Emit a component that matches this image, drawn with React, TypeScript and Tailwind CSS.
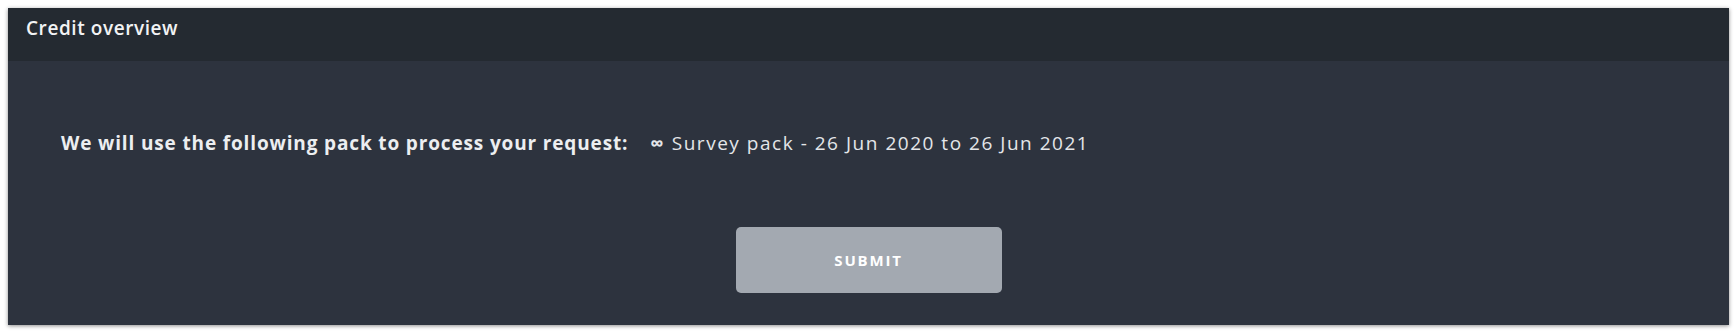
export default function App() {
  return (
    <div className="min-h-screen bg-white p-2 pr-[7px]" style={{ fontFamily: '"Open Sans", "Noto Sans", sans-serif' }}>
      <div className="flex h-[317px] flex-col bg-[#2d333e] shadow-[0_1px_4px_rgba(0,0,0,0.45)]">
        {/* Header */}
        <div className="h-[53px] bg-[#242a31] px-[18px] pt-[6px]">
          <h2 className="text-[19px] leading-7 font-semibold tracking-[0.03em] text-[#f2f3f4]">Credit overview</h2>
        </div>

        {/* Body */}
        <div className="flex flex-1 flex-col pt-[68px]">
          <div className="flex items-center px-[53px] text-[19px] leading-7 text-[#eceef0]">
            <span className="font-bold tracking-[0.045em]">We will use the following pack to process your request:</span>
            <span className="ml-[22px] tracking-[0.08em] text-[#e4e6e9]">
              <span className="font-bold">∞</span> Survey pack - 26 Jun 2020 to 26 Jun 2021
            </span>
          </div>

          <div className="mt-[70px] flex justify-center">
            <button
              type="button"
              className="h-[66px] w-[266px] rounded-[5px] bg-[#a3a9b1] text-[15px] font-bold tracking-[0.12em] text-white"
            >
              SUBMIT
            </button>
          </div>
        </div>
      </div>
    </div>
  );
}
